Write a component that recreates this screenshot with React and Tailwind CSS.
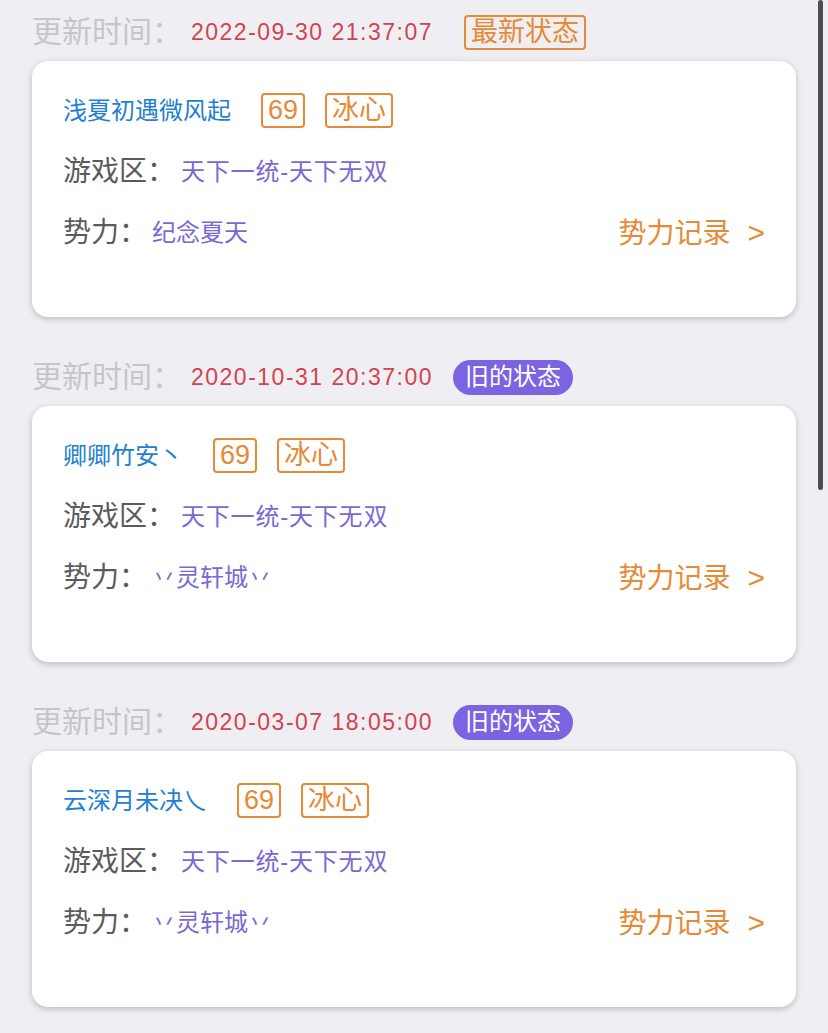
import React from 'react';

const records = [
  {
    time: '2022-09-30 21:37:07',
    latest: true,
    name: '浅夏初遇微风起',
    level: '69',
    school: '冰心',
    zone: '天下一统-天下无双',
    guild: '纪念夏天',
  },
  {
    time: '2020-10-31 20:37:00',
    latest: false,
    name: '卿卿竹安丶',
    level: '69',
    school: '冰心',
    zone: '天下一统-天下无双',
    guild: '丷灵轩城丷',
  },
  {
    time: '2020-03-07 18:05:00',
    latest: false,
    name: '云深月未决乀',
    level: '69',
    school: '冰心',
    zone: '天下一统-天下无双',
    guild: '丷灵轩城丷',
  },
];

const font = { fontFamily: '"Liberation Sans", "Noto Sans CJK SC", sans-serif' };

const Tag = ({ children }) => (
  <span className="flex h-[35px] items-center rounded-[4px] border-2 border-[#e68a35] px-[5px] text-[27px] leading-none text-[#e68a35]">
    {children}
  </span>
);

const Record = ({ item }) => (
  <section>
    {/* 更新时间 */}
    <div className="flex h-[58px] items-center">
      <span className="text-[30px] leading-none text-[#c6c6ca]">更新时间：</span>
      <span className="ml-[9px] text-[23px] leading-none tracking-[1.5px] text-[#d2434f]">{item.time}</span>
      {item.latest ? (
        <span className="ml-[31px] flex h-[35px] items-center rounded-[4px] border-2 border-[#e68a35] px-[5px] text-[27px] leading-none text-[#e68a35]">
          最新状态
        </span>
      ) : (
        <span className="ml-[20px] flex h-[35px] items-center rounded-full bg-[#7c63e1] px-[12px] text-[24px] leading-none text-white">
          旧的状态
        </span>
      )}
    </div>

    <div className="h-[256px] rounded-[16px] bg-white pl-[31px] pr-[31px] pt-[19px] shadow-[0_2px_6px_rgba(0,0,0,0.22)]">
      <div className="flex h-[61px] items-center">
        <span className="text-[24px] leading-none text-[#1f80d2]">{item.name}</span>
        <div className="ml-[30px] flex items-center gap-[20px]">
          <Tag>{item.level}</Tag>
          <Tag>{item.school}</Tag>
        </div>
      </div>
      <div className="flex h-[61px] items-center">
        <span className="text-[28px] leading-none text-[#5b5b5e]">游戏区：</span>
        <span className="ml-[6px] text-[24px] leading-none tracking-[0.8px] text-[#7a69d4]">{item.zone}</span>
      </div>
      <div className="flex h-[61px] items-center">
        <span className="text-[28px] leading-none text-[#5b5b5e]">势力：</span>
        <span className="ml-[5px] text-[24px] leading-none text-[#7a69d4]">{item.guild}</span>
        <span className="ml-auto text-[28px] leading-none text-[#e68a35]">
          势力记录<span className="ml-[17px] text-[30px]">&gt;</span>
        </span>
      </div>
    </div>
  </section>
);

const App = () => {
  return (
    <div className="relative min-h-screen bg-[#efeef3] px-[32px] pt-[3px]" style={font}>
      <div className="flex flex-col gap-[31px]">
        {records.map((item) => (
          <Record key={item.time} item={item} />
        ))}
      </div>
      {/* 滚动条 */}
      <div className="absolute right-[5px] top-0 h-[490px] w-[5px] rounded-full bg-[#4b4b50]" />
    </div>
  );
};

export default App;
